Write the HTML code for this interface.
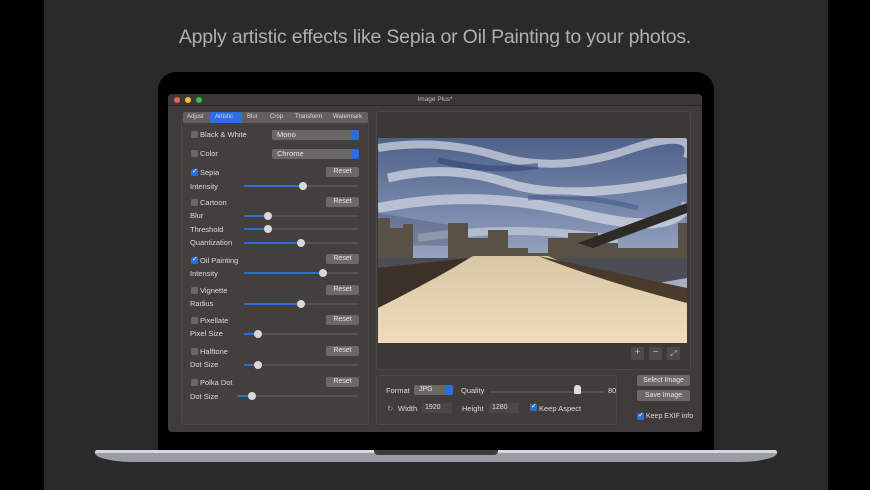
<!DOCTYPE html>
<html><head><meta charset="utf-8"><style>
*{margin:0;padding:0;box-sizing:border-box}
body{width:870px;height:490px;background:#000;position:relative;overflow:hidden;font-family:"Liberation Sans",sans-serif}
.a{position:absolute}
.t{font-size:7.5px;color:#ddd;white-space:nowrap}
.cb{position:absolute;width:7px;height:7px;background:#6a6866;border-radius:1.5px}
.cb.on{background:#2a6fe0}
.cb.on::after{content:"✓";position:absolute;left:1px;top:-2px;font-size:7px;color:#fff}
.btn{position:absolute;width:33px;height:10px;background:#6b6865;border-radius:2px;color:#e6e6e6;font-size:7px;text-align:center;line-height:10px}
.tr{position:absolute;height:2px;background:#55524f;border-radius:1px}
.fl{position:absolute;height:2px;background:#2f6fd8;border-radius:1px}
.kn{position:absolute;width:8px;height:8px;border-radius:50%;background:#d8d8d8}
.pop{position:absolute;width:87px;height:10px;background:#6a6765;border-radius:2px;color:#e6e6e6;font-size:7.5px;line-height:10px;padding-left:5px}
.pop::after{content:"";position:absolute;right:0;top:0;width:8px;height:10px;background:#2a6fe0;border-radius:0 2px 2px 0}
.fld{position:absolute;height:10px;background:#4a4745;color:#ddd;font-size:7px;line-height:10px;padding-left:3px}
</style></head><body>
<div class="a" style="left:44px;top:0;width:784px;height:490px;background:#2a2a2a"></div>
<div class="a" style="left:0;top:26px;width:870px;text-align:center;font-size:19.5px;color:#b0b0b0;font-weight:300;letter-spacing:-0.2px">Apply artistic effects like Sepia or Oil Painting to your photos.</div>
<div class="a" style="left:158px;top:72px;width:556px;height:385px;background:#000;border-radius:18px 18px 0 0"></div>
<div class="a" style="left:95px;top:450px;width:682px;height:4px;background:#d9d9db;border-radius:2px 2px 0 0"></div>
<div class="a" style="left:95px;top:453px;width:682px;height:9px;background:#9a9ca6;border-radius:0 0 40px 40px/0 0 9px 9px"></div>
<div class="a" style="left:374px;top:450px;width:124px;height:5px;background:#3c3c40;border-radius:0 0 4px 4px"></div>
<div class="a" style="left:168px;top:94px;width:534px;height:338px;background:#3e3b38;border-radius:4px"></div>
<div class="a" style="left:168px;top:94px;width:534px;height:12px;background:#3a3836;border-radius:4px 4px 0 0;border-bottom:1px solid #2a2826"></div>
<div class="a" style="left:174px;top:97px;width:6px;height:6px;border-radius:50%;background:#fc5f57"></div>
<div class="a" style="left:185px;top:97px;width:6px;height:6px;border-radius:50%;background:#fcbc2e"></div>
<div class="a" style="left:196px;top:97px;width:6px;height:6px;border-radius:50%;background:#2ac840"></div>
<div class="a t" style="left:0;width:870px;text-align:center;top:96px;font-size:6.5px;color:#bbb">Image Plus*</div>
<div class="a" style="left:181px;top:118px;width:188px;height:307px;border:1px solid #4c4946;background:#423f3c;border-radius:3px"></div>
<div class="a" style="left:183px;top:112px;width:185px;height:11px;background:#625f5c;border-radius:2px"></div>
<div class="a" style="left:210px;top:112px;width:32px;height:11px;background:#2a6fe0"></div>
<div class="a t" style="top:114px;left:187px;font-size:6px">Adjust</div>
<div class="a t" style="top:114px;left:215px;font-size:6px">Artistic</div>
<div class="a t" style="top:114px;left:247px;font-size:6px">Blur</div>
<div class="a t" style="top:114px;left:270px;font-size:6px">Crop</div>
<div class="a t" style="top:114px;left:295px;font-size:6px">Transform</div>
<div class="a t" style="top:114px;left:333px;font-size:6px">Watermark</div>

<div class="cb" style="left:191px;top:131px"></div><div class="a t" style="left:200px;top:130px">Black &amp; White</div>
<div class="pop" style="left:272px;top:130px">Mono</div>
<div class="cb" style="left:191px;top:150px"></div><div class="a t" style="left:200px;top:149px">Color</div>
<div class="pop" style="left:272px;top:149px">Chrome</div>

<div class="cb on" style="left:191px;top:169px"></div><div class="a t" style="left:200px;top:168px">Sepia</div><div class="btn" style="left:326px;top:167px">Reset</div>
<div class="a t" style="left:190px;top:182px">Intensity</div><div class="tr" style="left:244px;top:185px;width:115px"></div><div class="fl" style="left:244px;top:185px;width:59px"></div><div class="kn" style="left:299px;top:182px"></div>

<div class="cb" style="left:191px;top:199px"></div><div class="a t" style="left:200px;top:198px">Cartoon</div><div class="btn" style="left:326px;top:197px">Reset</div>
<div class="a t" style="left:190px;top:211px">Blur</div><div class="tr" style="left:244px;top:215px;width:115px"></div><div class="fl" style="left:244px;top:215px;width:24px"></div><div class="kn" style="left:264px;top:212px"></div>
<div class="a t" style="left:190px;top:225px">Threshold</div><div class="tr" style="left:244px;top:228px;width:115px"></div><div class="fl" style="left:244px;top:228px;width:24px"></div><div class="kn" style="left:264px;top:225px"></div>
<div class="a t" style="left:190px;top:238px">Quantization</div><div class="tr" style="left:244px;top:242px;width:115px"></div><div class="fl" style="left:244px;top:242px;width:57px"></div><div class="kn" style="left:297px;top:239px"></div>

<div class="cb on" style="left:191px;top:257px"></div><div class="a t" style="left:200px;top:256px">Oil Painting</div><div class="btn" style="left:326px;top:254px">Reset</div>
<div class="a t" style="left:190px;top:269px">Intensity</div><div class="tr" style="left:244px;top:272px;width:115px"></div><div class="fl" style="left:244px;top:272px;width:79px"></div><div class="kn" style="left:319px;top:269px"></div>

<div class="cb" style="left:191px;top:287px"></div><div class="a t" style="left:200px;top:286px">Vignette</div><div class="btn" style="left:326px;top:285px">Reset</div>
<div class="a t" style="left:190px;top:299px">Radius</div><div class="tr" style="left:244px;top:303px;width:115px"></div><div class="fl" style="left:244px;top:303px;width:57px"></div><div class="kn" style="left:297px;top:300px"></div>

<div class="cb" style="left:191px;top:317px"></div><div class="a t" style="left:200px;top:316px">Pixellate</div><div class="btn" style="left:326px;top:315px">Reset</div>
<div class="a t" style="left:190px;top:329px">Pixel Size</div><div class="tr" style="left:244px;top:333px;width:115px"></div><div class="fl" style="left:244px;top:333px;width:14px"></div><div class="kn" style="left:254px;top:330px"></div>

<div class="cb" style="left:191px;top:348px"></div><div class="a t" style="left:200px;top:347px">Halftone</div><div class="btn" style="left:326px;top:346px">Reset</div>
<div class="a t" style="left:190px;top:360px">Dot Size</div><div class="tr" style="left:244px;top:364px;width:115px"></div><div class="fl" style="left:244px;top:364px;width:14px"></div><div class="kn" style="left:254px;top:361px"></div>

<div class="cb" style="left:191px;top:379px"></div><div class="a t" style="left:200px;top:378px">Polka Dot</div><div class="btn" style="left:326px;top:377px">Reset</div>
<div class="a t" style="left:190px;top:392px">Dot Size</div><div class="tr" style="left:237px;top:395px;width:122px"></div><div class="fl" style="left:237px;top:395px;width:15px"></div><div class="kn" style="left:248px;top:392px"></div>

<div class="a" style="left:376px;top:111px;width:315px;height:259px;border:1px solid #4c4946;background:#3b3835;border-radius:3px"></div>
<svg class="a" style="left:378px;top:138px" width="309" height="205" viewBox="0 0 309 205">
<defs>
<linearGradient id="sky" x1="0" y1="0" x2="0" y2="1"><stop offset="0" stop-color="#4f6188"/><stop offset=".35" stop-color="#7788ac"/><stop offset=".6" stop-color="#9aa6c0"/><stop offset="1" stop-color="#c0c3cc"/></linearGradient>
<linearGradient id="gr" x1="0" y1="0" x2="0" y2="1"><stop offset="0" stop-color="#d8c6a4"/><stop offset="1" stop-color="#f0dcba"/></linearGradient>
</defs>
<rect width="309" height="205" fill="url(#sky)"/>
<path d="M0 10 Q60 0 120 18 T250 12 T309 20" stroke="#d5d9e4" stroke-width="8" fill="none" opacity=".7"/>
<path d="M10 40 Q70 25 130 45 T309 40" stroke="#e2e5ec" stroke-width="9" fill="none" opacity=".65"/>
<path d="M60 22 Q110 35 160 28" stroke="#2f4478" stroke-width="6" fill="none" opacity=".6"/>
<path d="M0 70 Q100 50 200 75 T309 65" stroke="#e6e8ee" stroke-width="10" fill="none" opacity=".6"/>
<path d="M150 60 Q200 55 260 70" stroke="#3a4f86" stroke-width="5" fill="none" opacity=".5"/>
<path d="M40 100 Q140 85 240 102" stroke="#e0e2e8" stroke-width="8" fill="none" opacity=".5"/>
<path d="M0 75 L0 110 Q50 105 90 110 L90 90 Z" fill="#3a3f55" opacity=".3"/>
<path d="M0 80 H12 V90 H25 V86 H35 V120 H70 V85 H90 V100 H110 V92 H130 V110 H150 V115 H170 V100 H190 V95 H220 V105 H240 V110 H300 V85 H309 V110 L309 120 H0Z" fill="#5a5146"/>
<path d="M0 120 H309 V140 L280 145 L0 140 Z" fill="#4b4c54"/>
<path d="M200 105 L309 65 V75 L215 110 Z" fill="#2e2a28"/>
<path d="M0 130 L90 120 Q60 140 0 170 Z" fill="#3b3128"/>
<path d="M95 118 L170 118 Q220 140 309 165 V205 H0 V170 Q60 140 95 118 Z" fill="url(#gr)"/>
<path d="M160 118 L309 150 V165 Q230 145 160 118Z" fill="#4a3a2c"/>
</svg>
<div class="a" style="left:631px;top:347px;width:13px;height:13px;background:#4d4a47;color:#bbb;font-size:10px;text-align:center;line-height:12px">+</div>
<div class="a" style="left:649px;top:347px;width:13px;height:13px;background:#4d4a47;color:#bbb;font-size:10px;text-align:center;line-height:12px">−</div>
<div class="a" style="left:667px;top:347px;width:13px;height:13px;background:#4d4a47;color:#bbb;font-size:8px;text-align:center;line-height:13px">⤢</div>

<div class="a" style="left:376px;top:375px;width:241px;height:50px;border:1px solid #4c4946;background:#403d3a;border-radius:3px"></div>
<div class="a t" style="left:386px;top:386px">Format</div>
<div class="pop" style="left:414px;top:385px;width:39px;font-size:7px">JPG</div>
<div class="a t" style="left:461px;top:386px">Quality</div>
<div class="tr" style="left:490px;top:391px;width:114px"></div>
<div class="a" style="left:574px;top:385px;width:7px;height:9px;background:#ddd;border-radius:3px 3px 1px 1px"></div>
<div class="a t" style="left:608px;top:386px">80</div>
<div class="a t" style="left:387px;top:404px;color:#999">↻</div>
<div class="a t" style="left:398px;top:404px">Width</div>
<div class="fld" style="left:422px;top:403px;width:30px">1920</div>
<div class="a t" style="left:462px;top:404px">Height</div>
<div class="fld" style="left:489px;top:403px;width:30px">1280</div>
<div class="cb on" style="left:530px;top:404px"></div><div class="a t" style="left:539px;top:404px">Keep Aspect</div>
<div class="btn" style="left:637px;top:375px;width:53px;height:11px;line-height:11px">Select Image</div>
<div class="btn" style="left:637px;top:390px;width:53px;height:11px;line-height:11px">Save Image</div>
<div class="cb on" style="left:637px;top:413px"></div><div class="a t" style="left:646px;top:413px;font-size:7px">Keep EXIF info</div>
</body></html>
